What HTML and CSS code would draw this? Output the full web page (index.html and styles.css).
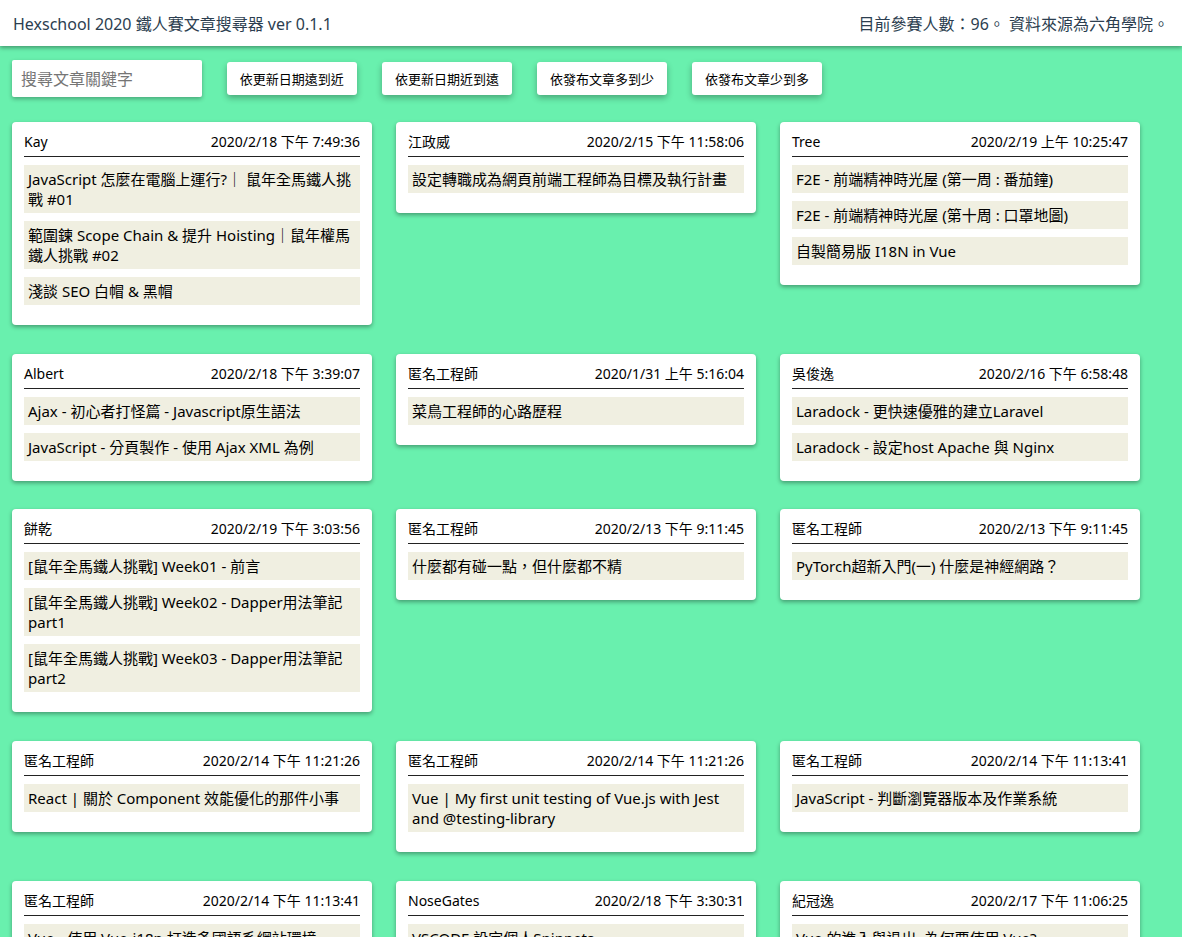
FILE: index.html
```html
<!DOCTYPE html>
<html lang="zh-Hant">
<head>
<meta charset="utf-8">
<title>Hexschool 2020 鐵人賽文章搜尋器</title>
<link rel="stylesheet" href="styles.css">
</head>
<body>
<header class="topbar">
  <div class="brand">Hexschool 2020 鐵人賽文章搜尋器 ver 0.1.1</div>
  <div class="info">目前參賽人數：96。 資料來源為六角學院。</div>
</header>
<main class="main">
  <div class="controls">
    <input class="search" type="text" placeholder="搜尋文章關鍵字">
    <button class="sort-btn">依更新日期遠到近</button>
    <button class="sort-btn">依更新日期近到遠</button>
    <button class="sort-btn">依發布文章多到少</button>
    <button class="sort-btn">依發布文章少到多</button>
  </div>
  <div class="cards">
    <section class="card">
      <div class="card-head"><span class="name">Kay</span><span class="date">2020/2/18 下午 7:49:36</span></div>
      <ul class="posts">
        <li>JavaScript 怎麼在電腦上運行?｜ 鼠年全馬鐵人挑戰 #01</li>
        <li>範圍鍊 Scope Chain &amp; 提升 Hoisting｜鼠年權馬鐵人挑戰 #02</li>
        <li>淺談 SEO 白帽 &amp; 黑帽</li>
      </ul>
    </section>
    <section class="card">
      <div class="card-head"><span class="name">江政威</span><span class="date">2020/2/15 下午 11:58:06</span></div>
      <ul class="posts">
        <li>設定轉職成為網頁前端工程師為目標及執行計畫</li>
      </ul>
    </section>
    <section class="card">
      <div class="card-head"><span class="name">Tree</span><span class="date">2020/2/19 上午 10:25:47</span></div>
      <ul class="posts">
        <li>F2E - 前端精神時光屋 (第一周 : 番茄鐘)</li>
        <li>F2E - 前端精神時光屋 (第十周 : 口罩地圖)</li>
        <li>自製簡易版 I18N in Vue</li>
      </ul>
    </section>
    <section class="card">
      <div class="card-head"><span class="name">Albert</span><span class="date">2020/2/18 下午 3:39:07</span></div>
      <ul class="posts">
        <li>Ajax - 初心者打怪篇 - Javascript原生語法</li>
        <li>JavaScript - 分頁製作 - 使用 Ajax XML 為例</li>
      </ul>
    </section>
    <section class="card">
      <div class="card-head"><span class="name">匿名工程師</span><span class="date">2020/1/31 上午 5:16:04</span></div>
      <ul class="posts">
        <li>菜鳥工程師的心路歷程</li>
      </ul>
    </section>
    <section class="card">
      <div class="card-head"><span class="name">吳俊逸</span><span class="date">2020/2/16 下午 6:58:48</span></div>
      <ul class="posts">
        <li>Laradock - 更快速優雅的建立Laravel</li>
        <li>Laradock - 設定host Apache 與 Nginx</li>
      </ul>
    </section>
    <section class="card">
      <div class="card-head"><span class="name">餅乾</span><span class="date">2020/2/19 下午 3:03:56</span></div>
      <ul class="posts">
        <li>[鼠年全馬鐵人挑戰] Week01 - 前言</li>
        <li>[鼠年全馬鐵人挑戰] Week02 - Dapper用法筆記 part1</li>
        <li>[鼠年全馬鐵人挑戰] Week03 - Dapper用法筆記 part2</li>
      </ul>
    </section>
    <section class="card">
      <div class="card-head"><span class="name">匿名工程師</span><span class="date">2020/2/13 下午 9:11:45</span></div>
      <ul class="posts">
        <li>什麼都有碰一點，但什麼都不精</li>
      </ul>
    </section>
    <section class="card">
      <div class="card-head"><span class="name">匿名工程師</span><span class="date">2020/2/13 下午 9:11:45</span></div>
      <ul class="posts">
        <li>PyTorch超新入門(一) 什麼是神經網路？</li>
      </ul>
    </section>
    <section class="card">
      <div class="card-head"><span class="name">匿名工程師</span><span class="date">2020/2/14 下午 11:21:26</span></div>
      <ul class="posts">
        <li>React | 關於 Component 效能優化的那件小事</li>
      </ul>
    </section>
    <section class="card">
      <div class="card-head"><span class="name">匿名工程師</span><span class="date">2020/2/14 下午 11:21:26</span></div>
      <ul class="posts">
        <li>Vue | My first unit testing of Vue.js with Jest and @testing-library</li>
      </ul>
    </section>
    <section class="card">
      <div class="card-head"><span class="name">匿名工程師</span><span class="date">2020/2/14 下午 11:13:41</span></div>
      <ul class="posts">
        <li>JavaScript - 判斷瀏覽器版本及作業系統</li>
      </ul>
    </section>
    <section class="card">
      <div class="card-head"><span class="name">匿名工程師</span><span class="date">2020/2/14 下午 11:13:41</span></div>
      <ul class="posts">
        <li>Vue - 使用 Vue-i18n 打造多國語系網站環境</li>
      </ul>
    </section>
    <section class="card">
      <div class="card-head"><span class="name">NoseGates</span><span class="date">2020/2/18 下午 3:30:31</span></div>
      <ul class="posts">
        <li>VSCODE 設定個人Snippets</li>
      </ul>
    </section>
    <section class="card">
      <div class="card-head"><span class="name">紀冠逸</span><span class="date">2020/2/17 下午 11:06:25</span></div>
      <ul class="posts">
        <li>Vue 的進入與退出, 為何要使用 Vue?</li>
      </ul>
    </section>
  </div>
</main>
</body>
</html>
```
FILE: styles.css
```css
* { box-sizing: border-box; }
html, body { margin: 0; padding: 0; }
body {
  background: #69f0ae;
  font-family: "Noto Sans", "Noto Sans CJK TC", sans-serif;
  color: #000;
}
.topbar {
  height: 46px;
  background: #fff;
  display: flex;
  align-items: center;
  justify-content: space-between;
  padding: 0 13px;
  box-shadow: 0 2px 4px rgba(0, 0, 0, 0.35);
  color: #2c3e50;
  font-size: 16px;
  position: relative;
}
.main {
  padding: 14px 12px 0;
}
.controls {
  display: flex;
  align-items: center;
  gap: 24.6px;
}
.search {
  width: 190px;
  height: 37px;
  border: none;
  border-radius: 2px;
  background: #fff;
  padding: 0 9px;
  font-family: inherit;
  font-size: 16px;
  box-shadow: 0 2px 4px rgba(0, 0, 0, 0.3);
  outline: none;
}
.search::placeholder { color: #757575; }
.sort-btn {
  width: 130.5px;
  height: 33px;
  border: none;
  border-radius: 3px;
  background: #fff;
  font-family: inherit;
  font-size: 13px;
  color: #000;
  padding: 0;
  box-shadow: 0 3px 6px rgba(0, 0, 0, 0.3);
}
.cards {
  margin-top: 25px;
  display: grid;
  grid-template-columns: repeat(3, 360px);
  column-gap: 24px;
  row-gap: 28.7px;
  align-items: start;
}
.card {
  background: #fff;
  border-radius: 4px;
  padding: 10px 12px 12px;
  box-shadow: 0 2px 4px rgba(0, 0, 0, 0.35);
}
.card-head {
  display: flex;
  justify-content: space-between;
  align-items: baseline;
  font-size: 14px;
  line-height: 20px;
  padding-bottom: 4px;
  border-bottom: 1px solid #222;
}
.posts {
  list-style: none;
  margin: 8px 0 0;
  padding: 0;
}
.posts li {
  background: #f0efe1;
  padding: 4px;
  font-size: 15px;
  line-height: 20px;
  margin-bottom: 8px;
}
```
